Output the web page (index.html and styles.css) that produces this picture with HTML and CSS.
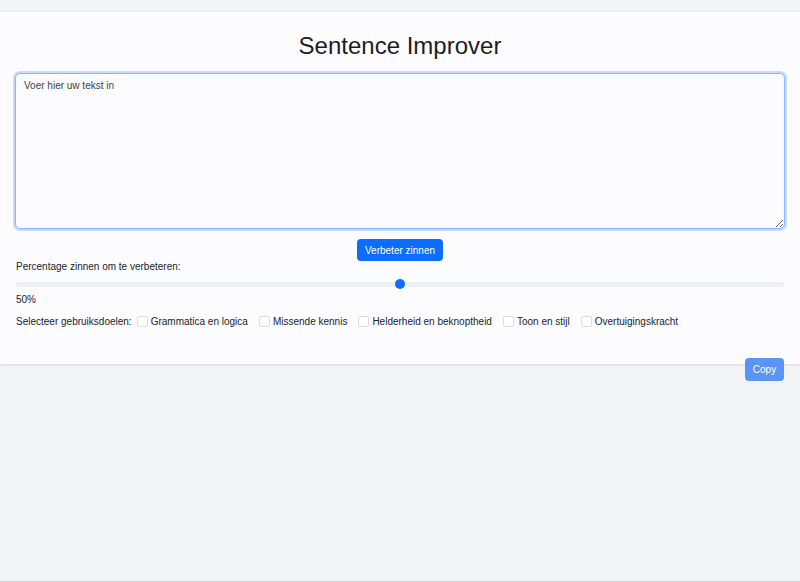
FILE: index.html
```html
<!DOCTYPE html>
<html lang="nl">
<head>
<meta charset="utf-8">
<title>Sentence Improver</title>
<link rel="stylesheet" href="styles.css">
</head>
<body>
<main class="page">
  <section class="card">
    <h1 class="title">Sentence Improver</h1>
    <div class="textarea-wrap">
      <textarea class="input" placeholder="Voer hier uw tekst in"></textarea>
    </div>
    <div class="actions">
      <button class="btn btn-primary" type="button">Verbeter zinnen</button>
    </div>
    <label class="field-label">Percentage zinnen om te verbeteren:</label>
    <div class="range">
      <div class="range-track"></div>
      <div class="range-thumb"></div>
    </div>
    <div class="value">50%</div>
    <div class="goals">
      <span class="goals-label">Selecteer gebruiksdoelen:</span>
      <label class="goal"><span class="box"></span>Grammatica en logica</label>
      <label class="goal"><span class="box"></span>Missende kennis</label>
      <label class="goal"><span class="box"></span>Helderheid en beknoptheid</label>
      <label class="goal"><span class="box"></span>Toon en stijl</label>
      <label class="goal"><span class="box"></span>Overtuigingskracht</label>
    </div>
  </section>
  <div class="copy-row">
    <button class="btn btn-copy" type="button">Copy</button>
  </div>
</main>
</body>
</html>
```

FILE: styles.css
```css
* { box-sizing: border-box; }
html, body { margin: 0; padding: 0; }
body {
  background: #f3f4f6;
  font-family: "Liberation Sans", Arial, sans-serif;
  color: #212529;
  font-size: 10px;
  min-height: 582px;
  border-bottom: 1px solid #c9c9cb;
}
.page { padding-top: 11px; }
.card {
  background: #fcfbfe;
  padding: 18px 15px 36px;
  box-shadow: 0 1px 2px rgba(0,0,0,0.12);
  border-top: 1px solid #eeeef1;
}
.title {
  margin: 0;
  text-align: center;
  font-size: 24px;
  font-weight: 400;
  line-height: 32px;
  color: #1d1d1f;
}
.textarea-wrap { margin-top: 11px; }
.input {
  display: block;
  width: 100%;
  height: 156px;
  resize: vertical;
  border: 1px solid #86b7fe;
  border-radius: 5px;
  box-shadow: 0 0 0 2px rgba(13,110,253,0.22);
  background: #fcfbfe;
  padding: 6px 8px;
  font-family: inherit;
  font-size: 10px;
  color: #212529;
  outline: none;
}
.input::placeholder { color: #3f4246; opacity: 1; }
.actions {
  display: flex;
  justify-content: center;
  margin-top: 10px;
}
.btn {
  border: none;
  font-family: inherit;
  font-size: 10px;
  color: #fff;
  border-radius: 4px;
  cursor: pointer;
}
.btn-primary {
  background: #0d6efd;
  height: 22px;
  padding: 0 8px;
}
.field-label {
  display: block;
  margin-top: -1px;
  line-height: 13px;
  color: #212529;
  padding-left: 1px;
}
.range {
  position: relative;
  height: 12px;
  margin-top: 6px;
}
.range-track {
  position: absolute;
  left: 1px; right: 1px; top: 3px;
  height: 5px;
  border-radius: 3px;
  background: #eff0f3;
}
.range-thumb {
  position: absolute;
  left: 380px; top: 0;
  width: 10px; height: 10px;
  border-radius: 50%;
  background: #0d6efd;
}
.value {
  margin-top: 2px;
  line-height: 13px;
  padding-left: 1px;
}
.goals {
  display: flex;
  align-items: center;
  margin-top: 9px;
  line-height: 13px;
  padding-left: 1px;
  white-space: nowrap;
}
.goals-label { margin-right: 5px; }
.goal {
  display: flex;
  align-items: center;
  margin-right: 11px;
}
.box {
  width: 11px; height: 11px;
  border: 1px solid #dcdde2;
  border-radius: 2px;
  background: #fff;
  margin-right: 3px;
}
.copy-row {
  display: flex;
  justify-content: flex-end;
  margin-top: -6px;
  padding-right: 16px;
  position: relative;
}
.btn-copy {
  background: #5a95f6;
  height: 23px;
  width: 39px;
  padding: 0;
}
```
